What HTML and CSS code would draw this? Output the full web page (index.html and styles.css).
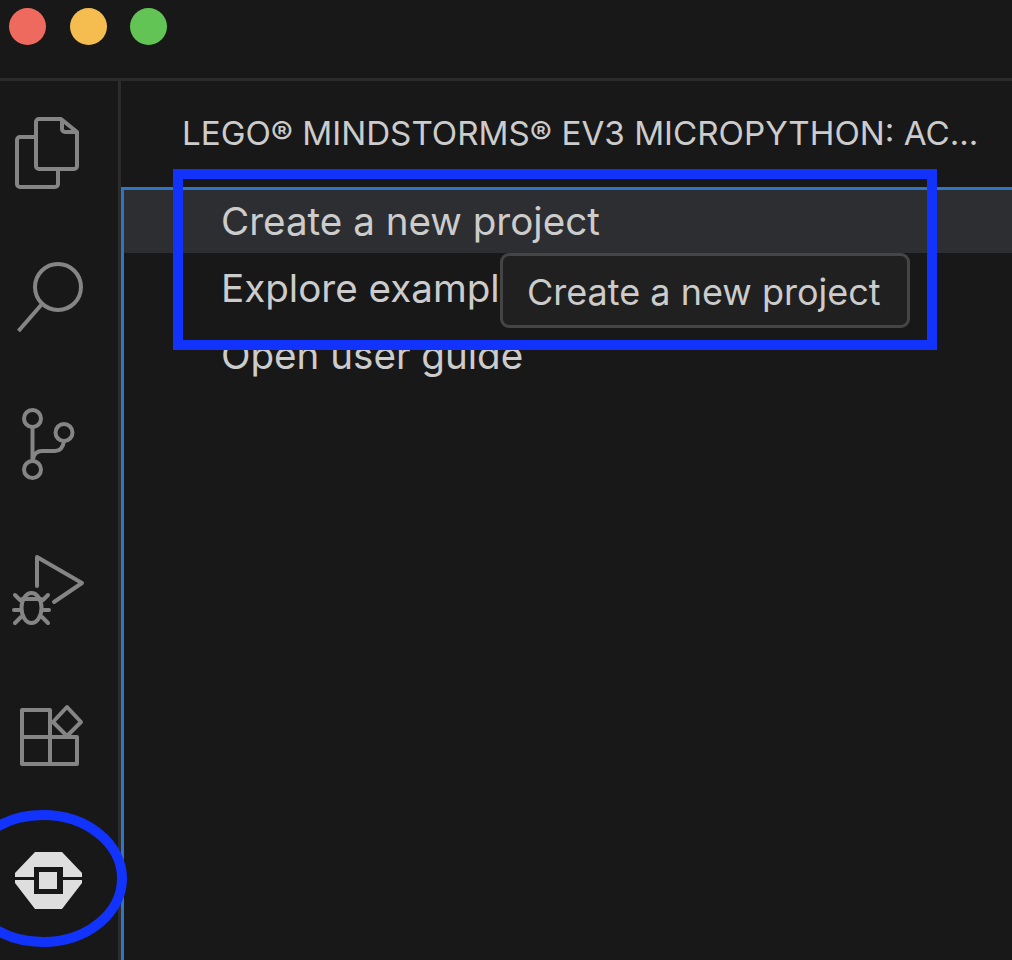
FILE: index.html
```html
<!DOCTYPE html>
<html lang="en">
<head>
    <meta charset="utf-8">
    <title>EV3 MicroPython</title>
    <link rel="stylesheet" href="styles.css">
</head>
<body>
    <div class="window">
        <div class="titlebar">
            <span class="light red"></span>
            <span class="light yellow"></span>
            <span class="light green"></span>
        </div>
        <div class="main">
            <div class="activity">
                <svg class="icon icon-files" viewBox="0 0 66 74" fill="none" stroke="#858585" stroke-width="4" stroke-linejoin="round">
                    <path d="M22 21H6a3 3 0 0 0-3 3v44a3 3 0 0 0 3 3h35a3 3 0 0 0 3-3V53"/>
                    <path d="M25 3h22l16 13v34a3 3 0 0 1-3 3H25a3 3 0 0 1-3-3V6a3 3 0 0 1 3-3z"/>
                    <path d="M48 3v10a3 3 0 0 0 3 3h12"/>
                </svg>
                <svg class="icon icon-search" viewBox="0 0 68 74" fill="none" stroke="#858585" stroke-width="4">
                    <circle cx="43" cy="27" r="23"/>
                    <path d="M27 44L3.5 71"/>
                </svg>
                <svg class="icon icon-scm" viewBox="0 0 56 78" fill="none" stroke="#858585" stroke-width="4">
                    <circle cx="11.5" cy="13.5" r="8.5"/>
                    <circle cx="43" cy="27.5" r="8.5"/>
                    <circle cx="11.5" cy="64.5" r="8.5"/>
                    <path d="M11.5 22v34"/>
                    <path d="M12 54c1-5 4-8 9-8h13c5 0 8-3 9-10"/>
                </svg>
                <svg class="icon icon-debug" viewBox="0 0 74 74" fill="none" stroke="#858585" stroke-width="4" stroke-linejoin="round" stroke-linecap="round">
                    <path d="M25 33V4l45 26-28 19"/>
                    <ellipse cx="19.5" cy="55" rx="10" ry="15"/>
                    <path d="M10 46h19"/>
                    <path d="M3 42l5 5M36 42l-5 5M2 57h7M30 57h7M3 70l6-6M36 70l-6-6"/>
                </svg>
                <svg class="icon icon-ext" viewBox="0 0 64 64" fill="none" stroke="#858585" stroke-width="4" stroke-linejoin="round">
                    <path d="M2 7h28v54H2z"/>
                    <path d="M2 34h55v27H30"/>
                    <path d="M33 19L47 4l14 15-14 14z"/>
                </svg>
                <svg class="icon icon-ev3" viewBox="0 0 67 57" fill="#dedede">
                    <path d="M20 0h27l20 21v4H48V15H19v10H0v-4z"/>
                    <path d="M0 28h19v14h29V28h19v3L47 57H20L0 31z"/>
                    <rect x="24" y="20" width="18" height="17"/>
                </svg>
            </div>
            <div class="sidebar">
                <div class="sidebar-title">LEGO® MINDSTORMS® EV3 MICROPYTHON: AC...</div>
                <ul class="actions">
                    <li class="action selected">Create a new project</li>
                    <li class="action">Explore examples</li>
                    <li class="action">Open user guide</li>
                </ul>
            </div>
        </div>
    </div>

    <div class="tooltip">Create a new project</div>
    <div class="mark-rect"></div>
    <svg class="mark-circle" width="140" height="150" viewBox="0 0 140 150" fill="none">
        <ellipse cx="43" cy="73.5" rx="79" ry="63.5" stroke="#1233fb" stroke-width="10"/>
    </svg>
</body>
</html>
```

FILE: styles.css
```css
html, body {
    width: 100%;
    height: 100%;
    margin: 0;
    background: #181818;
    overflow: hidden;
    font-family: Inter, "Liberation Sans", sans-serif;
}

.window {
    display: flex;
    flex-direction: column;
    height: 960px;
}

.titlebar {
    display: flex;
    flex-shrink: 0;
    align-items: flex-start;
    gap: 23.5px;
    box-sizing: border-box;
    height: 81px;
    padding: 8px 0 0 9px;
    border-bottom: 3px solid #2b2b2b;
}

.light {
    width: 37px;
    height: 37px;
    border-radius: 50%;
}

.light.red {
    background: #ee6a5f;
}

.light.yellow {
    background: #f5bd4f;
}

.light.green {
    background: #61c454;
}

.main {
    display: flex;
    flex: 1;
    min-height: 0;
}

.activity {
    position: relative;
    width: 118px;
    border-right: 3px solid #2b2b2b;
    flex-shrink: 0;
}

.icon {
    position: absolute;
}

.icon-files {
    left: 14px;
    top: 35px;
    width: 66px;
    height: 74px;
}

.icon-search {
    left: 15px;
    top: 179px;
    width: 68px;
    height: 74px;
}

.icon-scm {
    left: 21px;
    top: 324px;
    width: 56px;
    height: 78px;
}

.icon-debug {
    left: 12px;
    top: 472px;
    width: 74px;
    height: 74px;
}

.icon-ext {
    left: 20px;
    top: 622px;
    width: 64px;
    height: 64px;
}

.icon-ev3 {
    left: 15px;
    top: 771px;
    width: 67px;
    height: 57px;
}

.sidebar {
    flex: 1;
    min-width: 0;
}

.sidebar-title {
    height: 106px;
    box-sizing: border-box;
    padding: 35px 0 0 61px;
    color: #cccccc;
    font-size: 33.2px;
    line-height: 34px;
    white-space: nowrap;
}

.actions {
    list-style: none;
    box-sizing: border-box;
    margin: 0;
    padding: 0;
    height: 773px;
    border-top: 3px solid #2f75c4;
    border-left: 3px solid #2f75c4;
}

.action {
    height: 67px;
    padding-left: 97px;
    color: #cccccc;
    font-size: 38.6px;
    line-height: 67px;
    white-space: nowrap;
}

.action.selected {
    height: 63px;
    margin-bottom: 2px;
    background: #2d2e31;
    line-height: 63px;
}

.tooltip {
    position: absolute;
    left: 500px;
    top: 253px;
    box-sizing: border-box;
    width: 410px;
    height: 75px;
    padding-left: 24px;
    background: #202020;
    border: 3px solid #454545;
    border-radius: 9px;
    color: #cccccc;
    font-size: 36px;
    line-height: 72px;
    white-space: nowrap;
}

.mark-rect {
    position: absolute;
    left: 173px;
    top: 169px;
    box-sizing: border-box;
    width: 764px;
    height: 181px;
    border: 10px solid #1233fb;
}

.mark-circle {
    position: absolute;
    left: 0;
    top: 805px;
}
```
